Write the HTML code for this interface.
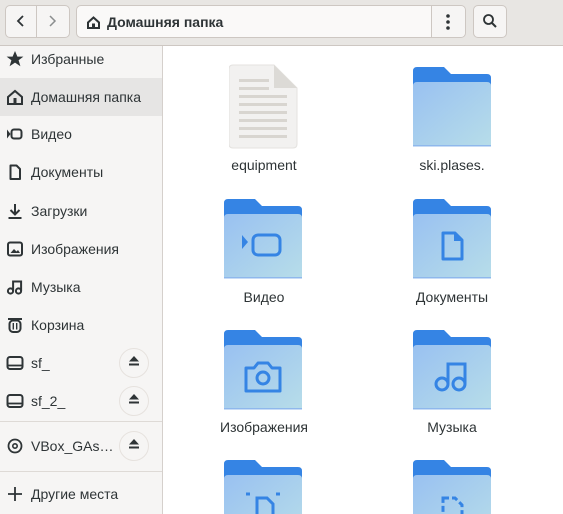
<!DOCTYPE html>
<html style="overflow:hidden;height:514px"><head><meta charset="utf-8"><style>
*{margin:0;padding:0;box-sizing:border-box}
html,body{width:563px;height:514px;overflow:hidden}
body{background:#fff;font-family:"Liberation Sans","DejaVu Sans",sans-serif;font-size:14px;color:#2e3436;position:relative}
.hdr{position:absolute;left:0;top:0;width:563px;height:46px;background:#e8e6e3;border-bottom:1px solid #cdc7c2}
.btn{position:absolute;background:#f6f5f4;border:1px solid #cdc7c2;border-radius:5px}
.side{position:absolute;left:0;top:46px;width:163px;height:468px;background:#f6f5f4;border-right:1px solid #d5d0cc}
.row{position:absolute;left:0;width:162px;height:38px;display:flex;align-items:center}
.row svg{position:absolute;left:6px}
.row span{position:absolute;left:31px;font-size:14px;color:#2e3436}
.ej{position:absolute;left:119px;width:30px;height:30px;border-radius:50%;border:1px solid #e6e2de;background:#f6f5f4}
.sep{position:absolute;left:0;width:162px;height:1px;background:#dedad6}
.it{position:absolute;width:140px;text-align:center;font-size:14px;color:#2e3436}
.f{position:absolute}
.wrap{position:absolute;left:0;top:0;width:563px;height:514px;overflow:hidden}
</style></head><body><div class="wrap">
<div class="hdr">
 <div class="btn" style="left:5px;top:5px;width:65px;height:33px"></div>
 <div style="position:absolute;left:36px;top:6px;width:1px;height:31px;background:#cdc7c2"></div>
 <svg style="position:absolute;left:14px;top:14px" width="14" height="14"><path d="M9 2L4 7l5 5" stroke="#2e3436" stroke-width="1.8" fill="none"/></svg>
 <svg style="position:absolute;left:45px;top:14px" width="14" height="14"><path d="M5 2l5 5-5 5" stroke="#8b8e8f" stroke-width="1.5" fill="none"/></svg>
 <div class="btn" style="left:76px;top:5px;width:390px;height:33px;background:#faf9f8"></div>
 <div style="position:absolute;left:431px;top:6px;width:34px;height:31px;background:#f6f5f4;border-left:1px solid #cdc7c2;border-radius:0 5px 5px 0"></div>
 <svg style="position:absolute;left:86px;top:15px" width="15" height="15"><path d="M2 7.5L7.5 2.5 13 7.5V13H2z" stroke="#2e3436" stroke-width="2" fill="none"/><rect x="6" y="8.5" width="3" height="4.5" fill="#2e3436"/></svg>
 <div style="position:absolute;left:107px;top:14px;font-weight:bold;font-size:14px">Домашняя папка</div>
 <svg style="position:absolute;left:444px;top:13px" width="8" height="18"><circle cx="4" cy="3" r="1.8" fill="#2e3436"/><circle cx="4" cy="9" r="1.8" fill="#2e3436"/><circle cx="4" cy="15" r="1.8" fill="#2e3436"/></svg>
 <div class="btn" style="left:473px;top:5px;width:34px;height:33px"></div>
 <svg style="position:absolute;left:482px;top:13px" width="16" height="16"><circle cx="6.5" cy="6.5" r="4.5" stroke="#2e3436" stroke-width="1.8" fill="none"/><path d="M10 10l4 4" stroke="#2e3436" stroke-width="2"/></svg>
</div>
<div class="side">
 <div class="row" style="top:-6px"><svg width="18" height="18"><path d="M9 1l2.4 5.6h6l-4.8 3.6 1.8 6L9 12.6 3.6 16.2l1.8-6L.6 6.6h6z" fill="#2e3436"/></svg><span>Избранные</span></div>
 <div class="row" style="top:32px;background:#e6e5e4"><svg width="18" height="18"><path d="M2 9L9 3l7 6v7H2z" stroke="#2e3436" stroke-width="2" fill="none"/><rect x="7.5" y="10" width="3" height="6" fill="#2e3436"/></svg><span>Домашняя папка</span></div>
 <div class="row" style="top:69px"><svg width="18" height="18"><path d="M1 4.5v9l3.5-4.5z" fill="#2e3436"/><rect x="5.5" y="4.5" width="10" height="9" rx="2.5" stroke="#2e3436" stroke-width="2" fill="none"/></svg><span>Видео</span></div>
 <div class="row" style="top:107px"><svg width="18" height="18"><path d="M4.5 2.5h6l3.5 3.5v10H4.5z" stroke="#2e3436" stroke-width="2" fill="none" stroke-linejoin="round"/></svg><span>Документы</span></div>
 <div class="row" style="top:146px"><svg width="18" height="18"><path d="M9 2v10M4.5 8l4.5 4.5 4.5-4.5M2.5 16h13" stroke="#2e3436" stroke-width="2" fill="none"/></svg><span>Загрузки</span></div>
 <div class="row" style="top:184px"><svg width="18" height="18"><rect x="2" y="2.5" width="14" height="13" rx="2" stroke="#2e3436" stroke-width="2" fill="none"/><path d="M4.5 13l3.5-4 2.5 2.5 1.5-1.5 2 3z" fill="#2e3436"/></svg><span>Изображения</span></div>
 <div class="row" style="top:222px"><svg width="18" height="18"><circle cx="4.5" cy="13" r="2.6" stroke="#2e3436" stroke-width="2" fill="none"/><circle cx="12.5" cy="13" r="2.6" stroke="#2e3436" stroke-width="2" fill="none"/><path d="M7.1 13V3.5h8v9.5" stroke="#2e3436" stroke-width="2" fill="none"/></svg><span>Музыка</span></div>
 <div class="row" style="top:260px"><svg width="18" height="18"><path d="M2 3h14" stroke="#2e3436" stroke-width="2"/><rect x="3.5" y="4.5" width="11" height="11.5" rx="3.5" stroke="#2e3436" stroke-width="2" fill="none"/><path d="M7.3 7v6.5M10.7 7v6.5" stroke="#2e3436" stroke-width="1.4"/></svg><span>Корзина</span></div>
 <div class="row" style="top:298px"><svg width="18" height="18"><rect x="1.5" y="3" width="15" height="12" rx="2.5" stroke="#2e3436" stroke-width="2" fill="none"/><path d="M2 11.5h14" stroke="#2e3436" stroke-width="1.8"/></svg><span>sf_</span><div class="ej" style="top:4px"></div></div>
 <div class="row" style="top:336px"><svg width="18" height="18"><rect x="1.5" y="3" width="15" height="12" rx="2.5" stroke="#2e3436" stroke-width="2" fill="none"/><path d="M2 11.5h14" stroke="#2e3436" stroke-width="1.8"/></svg><span>sf_2_</span><div class="ej" style="top:4px"></div></div>
 <div class="sep" style="top:375px"></div>
 <div class="row" style="top:381px"><svg width="18" height="18"><circle cx="9" cy="9" r="6.5" stroke="#2e3436" stroke-width="1.8" fill="none"/><circle cx="9" cy="9" r="2.2" stroke="#2e3436" stroke-width="1.6" fill="none"/></svg><span>VBox_GAs…</span><div class="ej" style="top:4px"></div></div>
 <div class="sep" style="top:425px"></div>
 <div class="row" style="top:429px"><svg width="18" height="18"><path d="M9 2v14M2 9h14" stroke="#2e3436" stroke-width="1.8"/></svg><span>Другие места</span></div>
</div>
<svg style="position:absolute;left:126px;top:353px" width="16" height="16"><path d="M8 3l5 5.5H3z" fill="#2e3436"/><rect x="3" y="10.5" width="10" height="2" fill="#2e3436"/></svg>
<svg style="position:absolute;left:126px;top:391px" width="16" height="16"><path d="M8 3l5 5.5H3z" fill="#2e3436"/><rect x="3" y="10.5" width="10" height="2" fill="#2e3436"/></svg>
<svg style="position:absolute;left:126px;top:436px" width="16" height="16"><path d="M8 3l5 5.5H3z" fill="#2e3436"/><rect x="3" y="10.5" width="10" height="2" fill="#2e3436"/></svg>

<svg width="0" height="0" style="position:absolute"><defs>
<linearGradient id="g" x1="0" y1="0" x2="1" y2="1"><stop offset="0" stop-color="#99c1f1"/><stop offset="1" stop-color="#b7dde9"/></linearGradient>
<symbol id="fold" viewBox="0 0 78 80"><path d="M0 4Q0 0 4 0H31L38 7H74Q78 7 78 11V40H0z" fill="#3584e4"/><path d="M0 19Q0 15 4 15H74Q78 15 78 19V79H0z" fill="url(#g)"/><rect x="0" y="78" width="78" height="1.5" fill="#8fb8ec"/></symbol>
</defs></svg>

<svg class="f" style="left:229px;top:64px" width="70" height="86"><path d="M4 1H45L68 24V80Q68 84 64 84H4Q0 84 0 80V5Q0 1 4 1z" fill="#f2f1f0" stroke="#e4e2df"/><path d="M45 1V24H68z" fill="#dcdad6"/><g fill="#d8d5d0"><rect x="10" y="15" width="30" height="3"/><rect x="10" y="23" width="30" height="3"/><rect x="10" y="31" width="48" height="3"/><rect x="10" y="39" width="48" height="3"/><rect x="10" y="47" width="48" height="3"/><rect x="10" y="55" width="48" height="3"/><rect x="10" y="63" width="48" height="3"/><rect x="10" y="71" width="48" height="3"/></g></svg>
<div class="it" style="left:194px;top:157px">equipment</div>

<svg class="f" style="left:413px;top:67px" width="78" height="80"><use href="#fold"/></svg>
<div class="it" style="left:382px;top:157px">ski.plases.</div>

<svg class="f" style="left:224px;top:199px" width="78" height="80"><use href="#fold"/><path d="M18 36v14l6-7z" fill="#3584e4"/><rect x="29" y="36" width="27" height="20" rx="5" stroke="#3584e4" stroke-width="3" fill="none"/></svg>
<div class="it" style="left:194px;top:289px">Видео</div>

<svg class="f" style="left:413px;top:199px" width="78" height="80"><use href="#fold"/><path d="M30 34h12l7 7v19H30z" stroke="#3584e4" stroke-width="3" fill="none" stroke-linejoin="round"/><path d="M41 34v8h8" fill="#3584e4"/></svg>
<div class="it" style="left:382px;top:289px">Документы</div>

<svg class="f" style="left:224px;top:330px" width="78" height="80"><use href="#fold"/><path d="M22 38h8l4-5h10l4 5h8v23H22z" stroke="#3584e4" stroke-width="3" fill="none" stroke-linejoin="round"/><circle cx="39" cy="48" r="6" stroke="#3584e4" stroke-width="3" fill="none"/></svg>
<div class="it" style="left:194px;top:419px">Изображения</div>

<svg class="f" style="left:413px;top:330px" width="78" height="80"><use href="#fold"/><circle cx="29" cy="54" r="6" stroke="#3584e4" stroke-width="3" fill="none"/><circle cx="46" cy="54" r="6" stroke="#3584e4" stroke-width="3" fill="none"/><path d="M35 54V34h17v20" stroke="#3584e4" stroke-width="3" fill="none"/></svg>
<div class="it" style="left:382px;top:419px">Музыка</div>

<svg class="f" style="left:224px;top:460px" width="78" height="54"><use href="#fold" width="78" height="80"/><path d="M33 38h10l6 6v20H33z" stroke="#3584e4" stroke-width="3" fill="none"/><path d="M22 34h4M52 34h4" stroke="#3584e4" stroke-width="3"/></svg>
<svg class="f" style="left:413px;top:460px" width="78" height="54"><use href="#fold" width="78" height="80"/><path d="M30 38h12l7 7v19H30z" stroke="#3584e4" stroke-width="3" fill="none" stroke-dasharray="6 3"/></svg>
</div></body></html>
